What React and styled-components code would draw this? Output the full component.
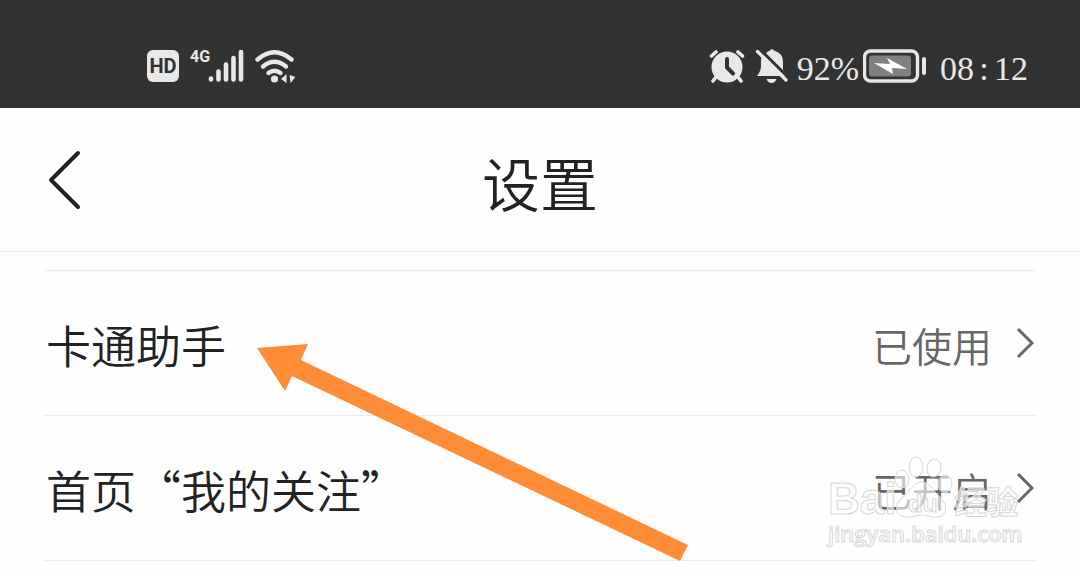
import React from 'react';
import styled, { createGlobalStyle } from 'styled-components';

const GlobalStyle = createGlobalStyle`
  * {
    box-sizing: border-box;
  }

  body {
    margin: 0;
    background: #fefefe;
    font-family: "Noto Sans CJK SC", sans-serif;
    font-weight: 350;
    color: #222;
  }
`;

const Page = styled.div`
  overflow: hidden;
`;

const StatusBar = styled.div`
  display: flex;
  justify-content: space-between;
  align-items: center;
  height: 108px;
  padding: 24px 52px 0 147px;
  background: #323232;
  color: #e8e8e8;
`;

const StatusGroup = styled.div`
  display: flex;
  align-items: center;
  gap: ${({ $gap }) => $gap}px;
`;

const HdBadge = styled.span`
  width: 32px;
  height: 32px;
  border-radius: 6px;
  background: #e8e8e8;
  color: #323232;
  font: 700 20px/33px Roboto, sans-serif;
  text-align: center;
`;

const Cellular = styled.div`
  display: flex;
  align-items: flex-start;
`;

const Network = styled.span`
  width: 18px;
  font: 700 16px/16px Roboto, sans-serif;
`;

const StatusText = styled.span`
  font: 400 34px/34px "Liberation Serif", serif;
  padding-top: 6px;
`;

const Colon = styled.span`
  display: inline-block;
  width: 20px;
  text-align: center;
`;

const Header = styled.header`
  display: grid;
  grid-template-columns: 1fr auto 1fr;
  align-items: center;
  height: 144px;
  padding: 0 44px;
  border-bottom: 1px solid #ececec;
`;

const BackButton = styled.button`
  display: flex;
  justify-self: start;
  padding: 0;
  border: 0;
  background: none;
  color: #222;
`;

const Title = styled.h1`
  margin: 0;
  padding-top: 4px;
  font-size: 58px;
  font-weight: 350;
  line-height: 64px;
`;

const List = styled.main`
  position: relative;
  margin-top: 18px;
  padding: 0 44px;
`;

const Row = styled.a`
  display: flex;
  align-items: center;
  height: 145px;
  padding: 0 2px;
  border-bottom: 1px solid #ececec;
  color: inherit;
  text-decoration: none;

  &:first-child {
    height: 146px;
    border-top: 1px solid #ececec;
  }
`;

const Label = styled.span`
  flex: 1;
  padding-top: 4px;
  font-size: 45px;
  line-height: 60px;
`;

const Value = styled.span`
  margin-right: 24px;
  padding-top: 4px;
  font-size: 40px;
  line-height: 60px;
  color: #666;
`;

const Arrow = styled.svg`
  position: absolute;
  left: 256px;
  top: 74px;
  pointer-events: none;
`;

const Watermark = styled.div`
  position: absolute;
  right: 59px;
  top: 184px;
  width: 193px;
  color: rgba(255, 255, 255, 0.6);
  -webkit-text-stroke: 1px #d8d8d8;
  white-space: nowrap;
  pointer-events: none;
`;

const Brand = styled.div`
  display: flex;
  align-items: flex-end;
  height: 64px;
  font: 700 44px/38px "Liberation Sans", sans-serif;
`;

const Paw = styled.svg`
  flex: none;
  margin-left: -2px;
  fill: rgba(255, 255, 255, 0.6);
  stroke: #d8d8d8;
`;

const BrandCn = styled.span`
  font: 700 32px/36px "Noto Sans CJK SC", sans-serif;
`;

const Site = styled.div`
  font: 600 22px/30px "Open Sans", sans-serif;
`;

const SignalIcon = () => (
  <svg width="36" height="34" viewBox="0 0 36 34" fill="none" stroke="currentColor" strokeWidth="4.6" strokeLinecap="round">
    <path d="M3 29.5v1M10.5 22.5v8M18 15.5v15M25.5 9v21.5M33 3v27.5" />
  </svg>
);

const WifiIcon = () => (
  <svg width="40" height="34" viewBox="1 0 40 34" fill="none">
    <g stroke="currentColor" strokeWidth="4.4" strokeLinecap="round">
      <path d="M3.5 10.5Q20.5 -4 37.5 10.5" />
      <path d="M9 17.5Q20.5 8 32 17.5" />
      <path d="M14.5 24Q20.5 19.5 26.5 24" />
    </g>
    <g fill="currentColor">
      <circle cx="20.5" cy="30" r="3.6" />
      <path d="M27 30L32.5 25v9zM35.5 26l6 2-5 6z" />
    </g>
  </svg>
);

const AlarmIcon = () => (
  <svg width="36" height="34" viewBox="0 0 36 34" fill="none" stroke="currentColor" strokeLinecap="round">
    <circle cx="18" cy="18" r="15.5" fill="currentColor" stroke="none" />
    <path d="M2.5 7L7 3M29 3l4.5 4M7 28l-3 4M29 28l3 4" strokeWidth="3.6" />
    <path d="M18 10v8.5l6 6" stroke="#323232" strokeWidth="4" />
  </svg>
);

const BellOffIcon = () => (
  <svg width="34" height="36" viewBox="0 0 34 36">
    <path
      d="M11 5Q13 3 15 2.5Q17-.5 19 2.5Q28 5 28 14v8l3 6H2q4-5 4-10v-5Q6 9 8 7zM11.5 31h10Q20 35 16.5 35T11.5 31z"
      fill="currentColor"
    />
    <path d="M5 1.5L34 30" stroke="#323232" strokeWidth="3" />
    <path d="M2.5 3.5L31 32" stroke="currentColor" strokeWidth="3.2" strokeLinecap="round" />
  </svg>
);

const BatteryIcon = () => (
  <svg width="64" height="34" viewBox="0 0 64 34">
    <rect x="1.5" y="2" width="53" height="30" rx="6" fill="none" stroke="currentColor" strokeWidth="3.4" />
    <rect x="6" y="6.5" width="42" height="21" rx="3" fill="#808080" />
    <path d="M11 14l16 1-3-6 20 11-15-1 1 6z" fill="#fff" />
    <path d="M61 10v14" stroke="currentColor" strokeWidth="4" strokeLinecap="round" />
  </svg>
);

const Chevron = () => (
  <svg width="18" height="32" viewBox="0 0 18 32" fill="none" stroke="#666" strokeWidth="3">
    <path d="M2 2l14 14L2 30" />
  </svg>
);

const PawIcon = () => (
  <Paw width="60" height="64" viewBox="0 0 60 64">
    <ellipse cx="8" cy="25" rx="7" ry="9" />
    <ellipse cx="22" cy="13" rx="7" ry="10" />
    <ellipse cx="40" cy="14" rx="7" ry="9" transform="rotate(12 40 14)" />
    <ellipse cx="51" cy="30" rx="7" ry="9" />
    <path d="M28 28C36 28 38 36 45 42C54 50 54 62 44 63C37 64 34 61 28 61S18 64 11 63C1 62 0 51 7 45C16 38 19 28 28 28Z" />
    <text x="14" y="58" fontFamily="Liberation Sans, sans-serif" fontSize="24" fontWeight="700">du</text>
  </Paw>
);

const rows = [
  { label: '卡通助手', value: '已使用' },
  { label: '首页“我的关注”', value: '已开启' },
];

const App = () => (
  <Page lang="zh-CN">
    <GlobalStyle />
    <StatusBar>
      <StatusGroup $gap={11}>
        <HdBadge>HD</HdBadge>
        <Cellular>
          <Network>4G</Network>
          <SignalIcon />
        </Cellular>
        <WifiIcon />
      </StatusGroup>
      <StatusGroup $gap={13}>
        <StatusGroup $gap={8}>
          <StatusGroup $gap={10}>
            <AlarmIcon />
            <BellOffIcon />
          </StatusGroup>
          <StatusGroup $gap={4}>
            <StatusText>92%</StatusText>
            <BatteryIcon />
          </StatusGroup>
        </StatusGroup>
        <StatusText>08<Colon>:</Colon>12</StatusText>
      </StatusGroup>
    </StatusBar>
    <Header>
      <BackButton type="button" aria-label="返回">
        <svg width="40" height="62" viewBox="0 0 40 62" fill="none" stroke="currentColor" strokeWidth="4" strokeLinecap="round" strokeLinejoin="round">
          <path d="M34 4L7 31l27 27" />
        </svg>
      </BackButton>
      <Title>设置</Title>
    </Header>
    <List>
      {rows.map(({ label, value }) => (
        <Row key={label} href="#">
          <Label>{label}</Label>
          <Value>{value}</Value>
          <Chevron />
        </Row>
      ))}
      <Watermark>
        <Brand>
          Bai
          <PawIcon />
          <BrandCn>经验</BrandCn>
        </Brand>
        <Site>jingyan.baidu.com</Site>
      </Watermark>
      <Arrow width="434" height="218" viewBox="0 0 434 218" fill="#ff8c37">
        <path d="M1 4L52 0L45 16L432 201L424 217L36 32L29 47Z" />
      </Arrow>
    </List>
  </Page>
);

export default App;
